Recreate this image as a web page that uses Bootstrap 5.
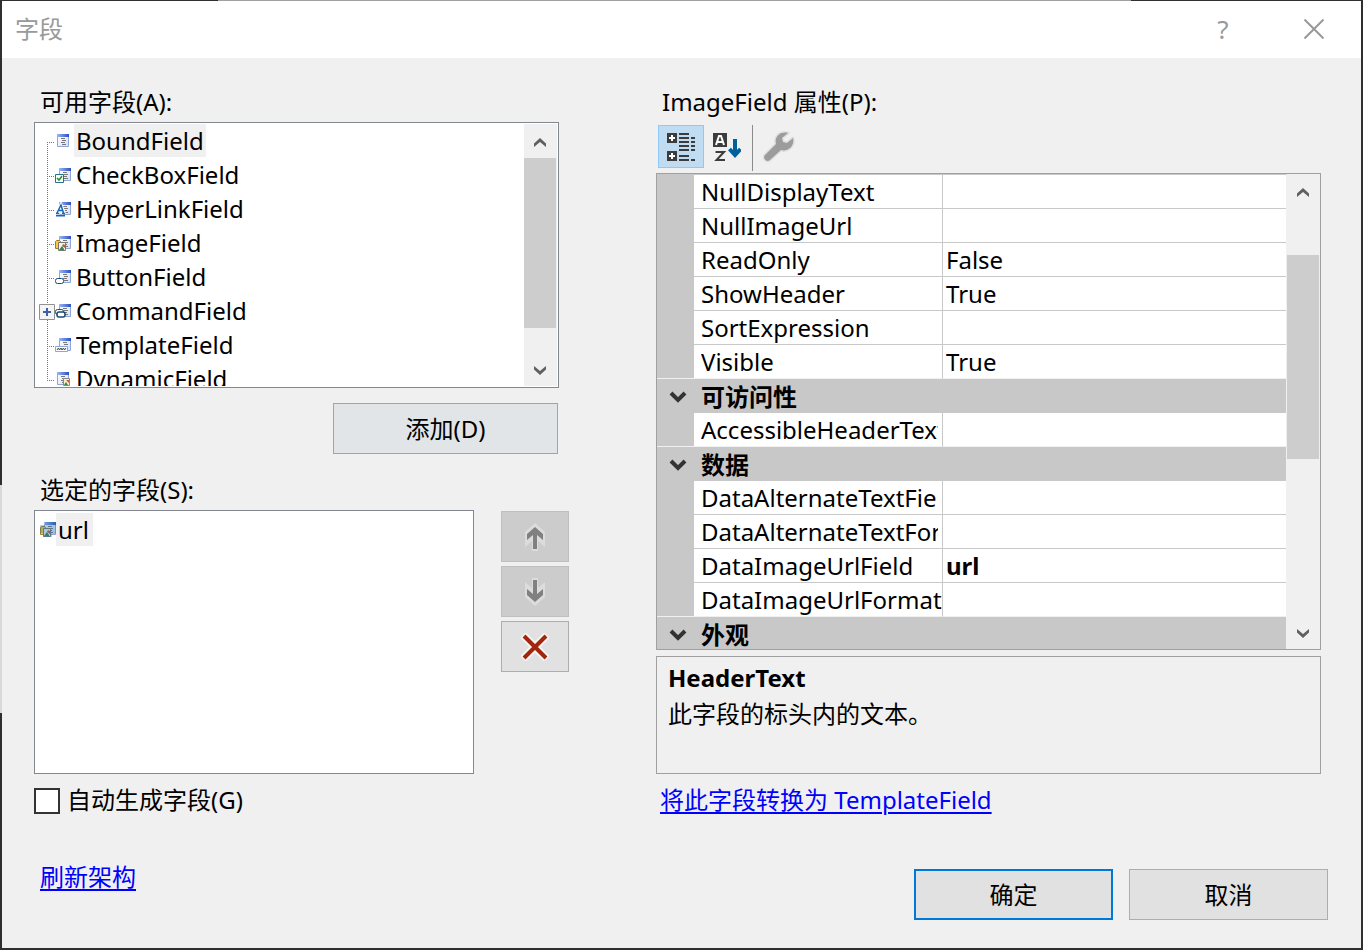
<!DOCTYPE html>
<html lang="zh-CN">
<head>
<meta charset="utf-8">
<meta name="viewport" content="width=device-width, initial-scale=1">
<title>字段</title>
<link href="https://cdn.jsdelivr.net/npm/bootstrap@5.3.0/dist/css/bootstrap.min.css" rel="stylesheet">
<style>
  body {
    font-family: "Noto Sans", "Noto Sans CJK SC", sans-serif;
    font-size: 24px; line-height: 34px; color: #000;
    padding: 1px 2px 2px;
    background:
      linear-gradient(to right, transparent 16%, #a0a0a0 16%, #a0a0a0 83%, transparent 83%) top / 100% 1px no-repeat,
      linear-gradient(to bottom, transparent 51%, #d8d8d8 51%, #d8d8d8 75%, transparent 75%) left / 2px 100% no-repeat,
      #2f2f31;
  }
  .dialog-window { background: #f0f0f0; min-height: calc(100vh - 3px); }
  .title-bar { background: #fff; color: #999; height: 57px; padding: 0 32px 2px 13px; }
  .title-bar button { color: #999; width: 30px; }
  .title-bar .help-btn { font-size: 26px; margin-right: 61px; }
  .dialog-body { display: grid; grid-template-columns: 535fr 665fr; column-gap: 87px; padding: 27px 40px 0 32px; }
  .field-label { padding-left: 6px; height: 37px; }
  .sunken { background: #fff; border: 1px solid #828790; }
  .tree-box { height: 266px; padding: 1px; margin-right: 10px; }
  .tree-box li { height: 34px; }
  .tree-box li svg { flex: none; }
  .item-text { line-height: 33px; height: 33px; padding: 0 2px; }
  .tree-box .item-text { margin-left: 3px; }
  .item-text.picked { background: #f0f0f0; }
  .scroll-track { background: #f0f0f0; width: 33px; flex: none; }
  .scroll-track button { height: 34px; flex: none; padding: 3px 1px 0 0; }
  .scroll-thumb { background: #cdcdcd; margin-right: 1px; }
  .sys-btn { background: #e1e1e1; border: 1px solid #adadad; border-radius: 0; height: 51px; font-size: 24px; line-height: 34px; color: #000; padding: 0; }
  .sys-btn.tinted { background: #e1e5e8; border-color: #a0a5aa; width: 225px; margin: 15px 11px 19px 0; }
  .sys-btn.wide { width: 199px; }
  .sys-btn.primary { border: 2px solid #0078d7; }
  .sys-btn:disabled { background: #cccccc; border-color: #bfbfbf; opacity: 1; }
  .side-btns { width: 68px; gap: 4px; padding-top: 1px; margin-left: 27px; }
  .selected-box { height: 264px; padding: 2px 0 0 5px; }
  .auto-check { appearance: none; width: 26px; height: 26px; background: #fff; border: 2px solid #333; margin: 2px 0 0; }
  .auto-check:checked { background: #333; }
  .auto-row { height: 34px; margin-top: 9px; gap: 7px; }
  .sys-link, .sys-link:hover { color: #00f; text-decoration: underline; text-decoration-thickness: 2px; text-underline-offset: 3px; }
  .tool-strip { height: 51px; padding: 3px 0 0 2px; }
  .tool-strip .tool { width: 46px; height: 43px; border: 1px solid transparent; background: none; padding: 0; }
  .tool-strip .tool.pressed { background: #c0dcf3; border-color: #90c8f6; }
  .tool-strip .rule { width: 1px; height: 46px; background: #8c8c8c; margin: 0 3px 0 2px; }
  .prop-box { border: 1px solid #a0a0a0; height: 477px; }
  .prop-grid { table-layout: fixed; width: 100%; border-collapse: separate; border-spacing: 0; border-top: 1px solid #c8c8c8; border-right: 1px solid #f0f0f0; line-height: 33px; }
  .prop-grid td, .prop-grid th { height: 34px; padding: 0; white-space: nowrap; overflow: hidden; }
  .prop-grid .gutter { width: 37px; background: #c8c8c8; text-align: center; }
  .prop-grid .prop-name { width: 249px; background: #fff; padding: 0 4px 0 7px; font-weight: 400; border: solid #c8c8c8; border-width: 0 1px 1px 0; }
  .prop-name span { display: block; overflow: hidden; }
  .prop-grid .prop-value { background: #fff; padding-left: 3px; border-bottom: 1px solid #c8c8c8; }
  .prop-grid .group-name { background: #c8c8c8; padding-left: 7px; }
  .prop-grid .before-group > * { border-bottom: 1px solid #f0f0f0; }
  .prop-grid .before-group .prop-name, .prop-grid .before-group .prop-value { border-bottom-color: #f0f0f0; }
  .toggle-btn { display: block; width: 37px; height: 32px; padding: 0 0 4px 5px; line-height: 1; }
  .help-box { border: 1px solid #a0a0a0; height: 118px; margin-top: 6px; padding: 3px 11px; line-height: 36px; }
  .dialog-footer { padding: 43px 33px 26px 38px; }
  .dialog-footer .footer-btns { padding-top: 9px; }
</style>
</head>
<body>
<svg width="0" height="0" class="position-absolute" aria-hidden="true">
  <defs>
    <linearGradient id="barBlue"><stop offset="0" stop-color="#9bb8f5"/><stop offset="1" stop-color="#2a4fc4"/></linearGradient>
    <linearGradient id="pageBlue" x2="1" y2="1"><stop offset="0" stop-color="#fff"/><stop offset="1" stop-color="#d5e0f6"/></linearGradient>
    <symbol id="page" viewBox="0 0 12 13">
      <path fill="url(#pageBlue)" stroke="#8fa6d8" d="M.5.5h11v12H.5z"/><path fill="url(#barBlue)" d="M0 0h12v3H0z"/>
      <path stroke="#777" d="M4 4.500h4M5 6.500h4M4 8.500h4M5 10.500h4"/>
    </symbol>
    <symbol id="photo" viewBox="0 0 16 16">
      <use href="#page" x="4" y="1" width="12" height="13"/>
      <path fill="#f3cb45" stroke="#a77d10" d="M.5 6.500l1-1h3l1 1v7h-5z"/>
      <path fill="#f5f3ea" stroke="#777" d="M3.500 7.500h7v8h-7z"/><path fill="#2c8c4a" d="m4 15 3-4 2 3v1z"/><path fill="#c35f38" d="m7 11 1-2 2 1v3z"/>
    </symbol>
    <symbol id="up" viewBox="0 0 12 10"><path fill="#606060" d="M6 0 0 5.500V9l6-5 6 5V5.500z"/></symbol>
    <symbol id="down" viewBox="0 0 12 10"><path fill="#606060" d="M6 9 0 3.500V0l6 5 6-5v3.500z"/></symbol>
    <symbol id="fold" viewBox="0 0 18 12"><path fill="none" stroke="#333" stroke-width="4" d="m2 2 7 7 7-7"/></symbol>
    <symbol id="branch" viewBox="0 0 20 34"><path stroke="#777" stroke-dasharray="1 1" d="M12.500 0v34M12 18.500h8"/></symbol>
  </defs>
</svg>

<main class="dialog-window d-flex flex-column">
  <header class="title-bar d-flex align-items-center">
    <span class="flex-grow-1">字段</span>
    <button type="button" class="help-btn border-0 bg-transparent p-0" aria-label="帮助">?</button>
    <button type="button" class="border-0 bg-transparent p-0 d-flex justify-content-center" aria-label="关闭">
      <svg width="20" height="20" viewBox="0 0 20 20"><path stroke="#999" stroke-width="2" d="m.5.500 19 19M19.500.5l-19 19"/></svg>
    </button>
  </header>

  <div class="dialog-body">
    <section class="d-flex flex-column">
      <div class="field-label">可用字段(A):</div>
      <div class="sunken tree-box d-flex">
        <ul class="list-unstyled m-0 flex-grow-1 overflow-hidden">
          <li class="d-flex"><svg width="19" height="34" viewBox="0 0 19 34"><path stroke="#777" stroke-dasharray="1 1" d="M11.500 18v16M11 18.500h8"/></svg>
            <svg width="16" height="34" viewBox="0 0 16 34"><use href="#page" x="2" y="10" width="12" height="13"/></svg><span class="item-text picked">BoundField</span></li>
          <li class="d-flex"><svg width="19" height="34" viewBox="1 0 19 34"><use href="#branch" width="20" height="34"/></svg>
            <svg width="16" height="34" viewBox="0 -9 16 34"><use href="#page" x="4" y="1" width="12" height="13"/><path fill="#fff" stroke="#26728c" d="M.5 7.500h8v8h-8z"/><path fill="none" stroke="#20902c" stroke-width="1.500" d="m2 11 2 2 3-4"/></svg><span class="item-text">CheckBoxField</span></li>
          <li class="d-flex"><svg width="19" height="34" viewBox="1 0 19 34"><use href="#branch" width="20" height="34"/></svg>
            <svg width="16" height="34" viewBox="0 -9 16 34"><use href="#page" x="4" y="1" width="12" height="13"/><path fill="none" stroke="#fff" stroke-width="4" d="m2 13 4-8 3 8"/><path fill="none" stroke="#1668b4" stroke-width="1.500" d="M1 12.500h3M7 12.500h3M2 12l4-8 2.500 8M4 9.500h4M1 14.800h9"/></svg><span class="item-text">HyperLinkField</span></li>
          <li class="d-flex"><svg width="19" height="34" viewBox="1 0 19 34"><use href="#branch" width="20" height="34"/></svg>
            <svg width="16" height="34" viewBox="0 -9 16 34"><use href="#photo" width="16" height="16"/></svg><span class="item-text">ImageField</span></li>
          <li class="d-flex"><svg width="19" height="34" viewBox="1 0 19 34"><use href="#branch" width="20" height="34"/></svg>
            <svg width="16" height="34" viewBox="0 -9 16 34"><use href="#page" x="4" y="1" width="12" height="13"/><rect x=".5" y="9.500" width="8" height="5" rx="2" fill="#fff" stroke="#174a72"/></svg><span class="item-text">ButtonField</span></li>
          <li class="d-flex"><svg width="19" height="34" viewBox="1 0 19 34"><use href="#branch" width="20" height="34"/><path fill="#f5f5f5" stroke="#919191" d="M4.500 10.500h15v15h-15z"/><path stroke="#3c5fa8" stroke-width="2" d="M8 18h8M12 14v8"/></svg>
            <svg width="16" height="34" viewBox="0 -9 16 34"><use href="#page" x="4" y="1" width="12" height="13"/><rect x=".5" y="6.500" width="8" height="5" rx="2" fill="#fff" stroke="#174a72"/><rect x="2" y="9" width="8" height="5" rx="2" fill="#fff" stroke="#174a72" stroke-width="1.500"/></svg><span class="item-text">CommandField</span></li>
          <li class="d-flex"><svg width="19" height="34" viewBox="1 0 19 34"><use href="#branch" width="20" height="34"/></svg>
            <svg width="16" height="34" viewBox="0 -9 16 34"><use href="#page" x="4" y="1" width="12" height="13"/><path fill="#fff" stroke="#88a9dc" d="M.5 9.500h12v5H.5z"/><path fill="none" stroke="#444" d="m2 13 1.500-2 1 2L6 11l1 2 1.500-2 1 2 1.500-2"/></svg><span class="item-text">TemplateField</span></li>
          <li class="d-flex"><svg width="19" height="34" viewBox="0 0 19 34"><path stroke="#777" stroke-dasharray="1 1" d="M11.500 0v18M11 18.500h8"/></svg>
            <svg width="16" height="34" viewBox="0 -9 16 34"><use href="#page" x="2" y="1" width="12" height="13"/><path fill="#f7edcd" stroke="#888" d="M8.500 7.500h6v7h-6z"/><path fill="#2c8c4a" d="m9 14 2-3 2 3z"/><path fill="#c35f38" d="M11 9h3v3z"/></svg><span class="item-text">DynamicField</span></li>
        </ul>
        <div class="scroll-track d-flex flex-column">
          <button type="button" class="border-0 bg-transparent" aria-label="向上滚动"><svg class="d-block mx-auto" width="12" height="10"><use href="#up"/></svg></button>
          <div class="scroll-thumb" style="height: 170px"></div>
          <button type="button" class="border-0 bg-transparent mt-auto" aria-label="向下滚动"><svg class="d-block mx-auto" width="12" height="10"><use href="#down"/></svg></button>
        </div>
      </div>
      <button type="button" class="btn sys-btn tinted align-self-end">添加(D)</button>
      <div class="field-label">选定的字段(S):</div>
      <div class="d-flex justify-content-between">
        <div class="sunken selected-box flex-grow-1 d-flex align-items-start">
          <svg width="16" height="34" viewBox="0 -8 16 34"><use href="#photo" width="16" height="16"/><path fill="#3075b0" fill-opacity=".35" d="M0 4h5V1h11v12h-4v3H3v-4H0z"/></svg><span class="item-text picked pe-1">url</span>
        </div>
        <div class="side-btns d-flex flex-column flex-shrink-0">
          <button type="button" class="btn sys-btn" disabled aria-label="上移"><svg class="d-block mx-auto" width="20" height="28" viewBox="0 0 20 28"><path fill="#dcdcdc" d="M10 0 0 9v15l7-6v10h6V18l7 6V9z"/><path fill="#808080" d="m10 4-8 7v6l6-5v14h4V12l6 5v-6z"/></svg></button>
          <button type="button" class="btn sys-btn" disabled aria-label="下移"><svg class="d-block mx-auto" width="20" height="28" viewBox="0 0 20 28"><path fill="#dcdcdc" d="M10 28 0 19V4l7 6V0h6v10l7-6v15z"/><path fill="#808080" d="m10 24-8-7v-6l6 5V2h4v14l6-5v6z"/></svg></button>
          <button type="button" class="btn sys-btn" aria-label="删除"><svg class="d-block mx-auto" width="28" height="28" viewBox="0 0 28 28"><path stroke="#f4f4f4" stroke-width="8" d="m2 2 24 24M26 2 2 26"/><path stroke="#a1260d" stroke-width="4" d="m3 3 22 22M25 3 3 25"/></svg></button>
        </div>
      </div>
      <div class="auto-row d-flex align-items-center">
        <input type="checkbox" class="auto-check" id="autoGen"><label for="autoGen">自动生成字段(G)</label>
      </div>
    </section>

    <section class="d-flex flex-column">
      <div class="field-label">ImageField 属性(P):</div>
      <div class="tool-strip d-flex">
        <button type="button" class="tool pressed" aria-label="按分类顺序">
          <svg class="d-block mx-auto" width="28" height="28" viewBox="0 0 28 28"><path fill="#3c3c3c" d="M0 0h10v10H0zM0 18h10v10H0z"/><path stroke="#fff" stroke-width="2" d="M2 5h6M5 2v6M2 23h6M5 20v6"/><path stroke="#3c3c3c" stroke-width="2" d="M12 1h10M12 5h10M12 9h10M12 13h10M12 17h10M12 23h10M12 27h10M24 5h4M24 9h4M24 13h4M24 17h4M24 27h4"/></svg></button>
        <button type="button" class="tool" aria-label="按字母顺序">
          <svg class="d-block mx-auto" width="28" height="28" viewBox="0 0 28 28"><path fill="#3c3c3c" d="M0 0h14v14H0z"/><path fill="none" stroke="#fff" stroke-width="2" d="m3 12 3-9h2l3 9M4 9h6"/><path fill="none" stroke="#3c3c3c" stroke-width="2" d="M2.500 19H11l-7.500 8H12"/><path fill="none" stroke="#00609c" stroke-width="4" d="M22 6v15M16.500 16l5.500 6 5.500-6"/></svg></button>
        <span class="rule"></span>
        <button type="button" class="tool" disabled aria-label="属性页">
          <svg class="d-block mx-auto" width="32" height="32" viewBox="0 0 32 32"><path fill="#9c9c9c" stroke="#e0e0e0" stroke-width="3" paint-order="stroke" stroke-linejoin="round" d="M25 2c-7-2-14 3-12 11L2 24c-3 3 2 8 5 5l11-10c7 2 14-4 12-12l-6 5-4-1-1-4z"/></svg></button>
      </div>
      <div class="prop-box d-flex overflow-hidden">
        <div class="flex-grow-1 overflow-hidden">
          <table class="prop-grid">
            <colgroup><col style="width: 37px"><col style="width: 249px"><col></colgroup>
            <tbody>
              <tr><td class="gutter"></td><th class="prop-name"><span>NullDisplayText</span></th><td class="prop-value"></td></tr>
              <tr><td class="gutter"></td><th class="prop-name"><span>NullImageUrl</span></th><td class="prop-value"></td></tr>
              <tr><td class="gutter"></td><th class="prop-name"><span>ReadOnly</span></th><td class="prop-value">False</td></tr>
              <tr><td class="gutter"></td><th class="prop-name"><span>ShowHeader</span></th><td class="prop-value">True</td></tr>
              <tr><td class="gutter"></td><th class="prop-name"><span>SortExpression</span></th><td class="prop-value"></td></tr>
              <tr class="before-group"><td class="gutter"></td><th class="prop-name"><span>Visible</span></th><td class="prop-value">True</td></tr>
              <tr><td class="gutter"><button type="button" class="toggle-btn border-0 bg-transparent" aria-label="折叠"><svg width="18" height="12"><use href="#fold"/></svg></button></td><th class="group-name" colspan="2">可访问性</th></tr>
              <tr class="before-group"><td class="gutter"></td><th class="prop-name"><span>AccessibleHeaderText</span></th><td class="prop-value"></td></tr>
              <tr><td class="gutter"><button type="button" class="toggle-btn border-0 bg-transparent" aria-label="折叠"><svg width="18" height="12"><use href="#fold"/></svg></button></td><th class="group-name" colspan="2">数据</th></tr>
              <tr><td class="gutter"></td><th class="prop-name"><span>DataAlternateTextField</span></th><td class="prop-value"></td></tr>
              <tr><td class="gutter"></td><th class="prop-name"><span>DataAlternateTextFormatString</span></th><td class="prop-value"></td></tr>
              <tr><td class="gutter"></td><th class="prop-name"><span>DataImageUrlField</span></th><td class="prop-value fw-bold">url</td></tr>
              <tr class="before-group"><td class="gutter"></td><th class="prop-name pe-0"><span>DataImageUrlFormatString</span></th><td class="prop-value"></td></tr>
              <tr><td class="gutter"><button type="button" class="toggle-btn border-0 bg-transparent" aria-label="折叠"><svg width="18" height="12"><use href="#fold"/></svg></button></td><th class="group-name" colspan="2">外观</th></tr>
            </tbody>
          </table>
        </div>
        <div class="scroll-track d-flex flex-column">
          <button type="button" class="border-0 bg-transparent" aria-label="向上滚动"><svg class="d-block mx-auto" width="12" height="10"><use href="#up"/></svg></button>
          <div class="scroll-thumb" style="height: 204px; margin-top: 47px"></div>
          <button type="button" class="border-0 bg-transparent mt-auto" aria-label="向下滚动"><svg class="d-block mx-auto" width="12" height="10"><use href="#down"/></svg></button>
        </div>
      </div>
      <div class="help-box"><div class="fw-bold">HeaderText</div><div>此字段的标头内的文本。</div></div>
      <div class="auto-row"><a href="#" class="sys-link ms-1">将此字段转换为 TemplateField</a></div>
    </section>
  </div>

  <footer class="dialog-footer d-flex align-items-start">
    <a href="#" class="sys-link me-auto">刷新架构</a>
    <div class="footer-btns d-flex gap-3">
      <button type="button" class="btn sys-btn wide primary">确定</button>
      <button type="button" class="btn sys-btn wide">取消</button>
    </div>
  </footer>
</main>
<script src="https://cdn.jsdelivr.net/npm/bootstrap@5.3.0/dist/js/bootstrap.bundle.min.js"></script>
</body>
</html>
